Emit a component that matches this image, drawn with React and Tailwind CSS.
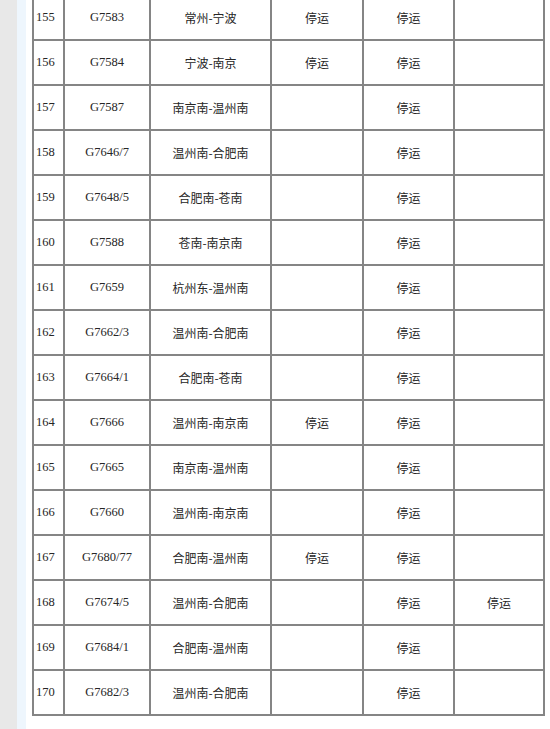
const rows = [
  ["155", "G7583", "常州-宁波", "停运", "停运", ""],
  ["156", "G7584", "宁波-南京", "停运", "停运", ""],
  ["157", "G7587", "南京南-温州南", "", "停运", ""],
  ["158", "G7646/7", "温州南-合肥南", "", "停运", ""],
  ["159", "G7648/5", "合肥南-苍南", "", "停运", ""],
  ["160", "G7588", "苍南-南京南", "", "停运", ""],
  ["161", "G7659", "杭州东-温州南", "", "停运", ""],
  ["162", "G7662/3", "温州南-合肥南", "", "停运", ""],
  ["163", "G7664/1", "合肥南-苍南", "", "停运", ""],
  ["164", "G7666", "温州南-南京南", "停运", "停运", ""],
  ["165", "G7665", "南京南-温州南", "", "停运", ""],
  ["166", "G7660", "温州南-南京南", "", "停运", ""],
  ["167", "G7680/77", "合肥南-温州南", "停运", "停运", ""],
  ["168", "G7674/5", "温州南-合肥南", "", "停运", "停运"],
  ["169", "G7684/1", "合肥南-温州南", "", "停运", ""],
  ["170", "G7682/3", "温州南-合肥南", "", "停运", ""],
];

const cell = "border border-[#858585] align-middle";
const serif = "font-['Liberation_Serif','Times_New_Roman',serif] text-[12.5px]";
const sans = "font-['Noto_Sans_CJK_SC','Noto_Sans',sans-serif] text-[12px] text-center";

export default function App() {
  return (
    <div className="flex h-[729px] overflow-hidden bg-white">
      <div className="w-[17px] shrink-0 bg-[#e8e8e8]" />
      <div className="w-[9px] shrink-0 bg-[#eef6fd]" />
      <div className="flex-1 pl-[6px]">
        <table className="mt-[-6px] w-[513px] table-fixed border-separate border-spacing-0 border border-[#858585] text-[#262626]">
          <colgroup>
            <col className="w-[31px]" />
            <col className="w-[86px]" />
            <col className="w-[121px]" />
            <col className="w-[92px]" />
            <col className="w-[91px]" />
            <col className="w-[90px]" />
          </colgroup>
          <tbody>
            {rows.map((r) => (
              <tr key={r[0]} className="h-[45px]">
                <td className={`${cell} ${serif} pl-[2px] text-left`}>{r[0]}</td>
                <td className={`${cell} ${serif} text-center`}>{r[1]}</td>
                <td className={`${cell} ${sans}`}>{r[2]}</td>
                <td className={`${cell} ${sans}`}>{r[3]}</td>
                <td className={`${cell} ${sans}`}>{r[4]}</td>
                <td className={`${cell} ${sans}`}>{r[5]}</td>
              </tr>
            ))}
          </tbody>
        </table>
      </div>
    </div>
  );
}
